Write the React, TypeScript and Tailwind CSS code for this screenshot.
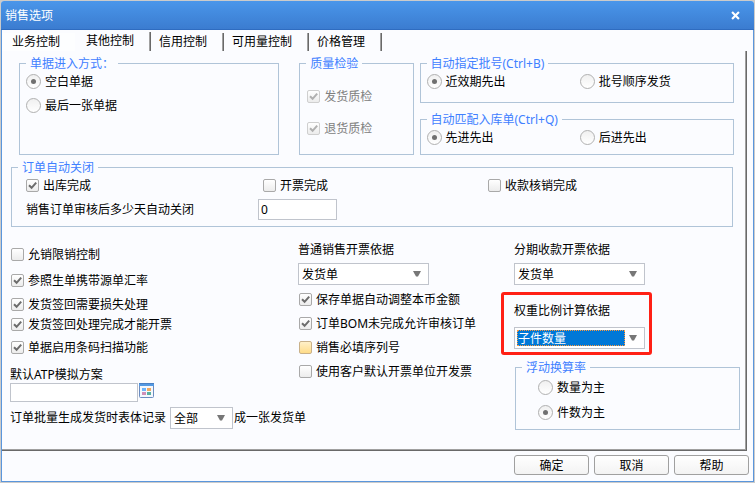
import { useState, type ReactNode } from "react";
import clsx from "clsx";

const TABS = ["业务控制", "其他控制", "信用控制", "可用量控制", "价格管理"];

function Group({ title, className, children }: { title: string; className?: string; children: ReactNode }) {
  return (
    <fieldset className={clsx("min-w-0 border border-[#b0c4d8] pl-[6px]", className)}>
      <legend className="px-1 pt-px leading-[14px] text-[#4080ff]">{title}</legend>
      {children}
    </fieldset>
  );
}

function Check({ label, checked = false, disabled, hot }: { label: string; checked?: boolean; disabled?: boolean; hot?: boolean }) {
  return (
    <label className={clsx("flex h-5 items-center gap-1 whitespace-nowrap", disabled && "text-[#808080]")}>
      <span className="relative flex size-[13px] shrink-0">
        <input
          type="checkbox"
          defaultChecked={checked}
          disabled={disabled}
          className={clsx(
            "peer size-[13px] appearance-none rounded-[2px] border bg-linear-to-b",
            hot ? "border-[#c9b189] from-[#fff0c8] to-[#ffdc88]" : "from-white to-[#ececec]",
            !hot && (disabled ? "border-[#cfcfcf]" : "border-[#a9a9a9]")
          )}
        />
        <svg viewBox="0 0 13 13" className={clsx("pointer-events-none absolute inset-0 hidden size-[13px] peer-checked:block", disabled ? "text-[#b0b0b0]" : "text-[#6c6c6c]")}>
          <path d="M3 6.2 5.6 8.8 10.2 3.6" fill="none" stroke="currentColor" strokeWidth="2" />
        </svg>
      </span>
      <span className="pt-[2px]">{label}</span>
    </label>
  );
}

function Radio({ name, label, checked = false }: { name: string; label: string; checked?: boolean }) {
  return (
    <label className="flex h-5 items-center gap-1 whitespace-nowrap">
      <span className="relative flex size-[15px] shrink-0">
        <input
          type="radio"
          name={name}
          defaultChecked={checked}
          className="peer size-[15px] appearance-none rounded-full border border-[#b0b0b0] bg-linear-to-b from-[#f0f0f0] to-white"
        />
        <span className="pointer-events-none absolute inset-[5px] hidden rounded-full bg-[#707070] peer-checked:block" />
      </span>
      <span className="pt-[2px]">{label}</span>
    </label>
  );
}

function Combo({ id, label, options, className, active }: { id: string; label: string; options: string[]; className?: string; active?: boolean }) {
  return (
    <div className={clsx("flex h-[22px] items-center border border-[#c0c4cc] bg-white p-[2px]", className)}>
      <select
        id={id}
        aria-label={label}
        className={clsx(
          "h-4 min-w-0 flex-1 appearance-none outline-none",
          active ? "border border-dotted border-[#ff9a3c] bg-[#0078d7] pt-px leading-[14px] text-white" : "px-px pt-px leading-4"
        )}
      >
        {options.map(o => <option key={o}>{o}</option>)}
      </select>
      <svg viewBox="0 0 8 6" className="pointer-events-none mr-[5px] ml-1 h-[6px] w-2 shrink-0">
        <path d="M0 0H8L5 5.5H3Z" fill="#777" />
      </svg>
    </div>
  );
}

function PickerIcon() {
  return (
    <svg viewBox="0 0 15 15" className="size-[15px]">
      <rect x=".5" y=".5" width="14" height="14" rx="1" fill="#f4f8fd" stroke="#6b8cc0" />
      <path d="M0 0H15V3H0Z" fill="#5499e2" />
      <path d="M0 0H15V1H0Z" fill="#4a80c4" />
      <path d="M3 5H7V8H3Z" fill="#6eb4fa" />
      <path d="M8 5H12V8H8Z" fill="#f2a860" />
      <path d="M3 9H7V12H3Z" fill="#cf8fb8" />
      <path d="M8 9H12V12H8Z" fill="#58b0a0" />
    </svg>
  );
}

export default function App() {
  const [tab, setTab] = useState(1);

  return (
    <div className="bg-[#cbcbcb] p-px font-['Noto_Sans','Noto_Sans_CJK_SC',sans-serif] text-[12px] leading-4 text-black">
      <div className="overflow-hidden rounded-t-[3px] bg-[#fbfcff]">
        <header className="flex h-[29px] items-center justify-between border-b border-[#2f6cc0] bg-linear-to-b from-[#4a96ea] to-[#3b7cd0] pr-[13px] pl-1 text-white">
          <h1 className="pt-px">销售选项</h1>
          <button aria-label="关闭" className="p-px">
            <svg viewBox="0 0 10 10" className="size-[9px]">
              <path d="M1.2 1.2 8.8 8.8M8.8 1.2 1.2 8.8" stroke="#fff" strokeWidth="2.4" />
            </svg>
          </button>
        </header>

        <div className="border-x border-b border-[#5a96dc]">
          <div role="tablist" className="flex h-[21px] items-end">
            {TABS.map((t, i) => (
              <button
                key={t}
                role="tab"
                aria-selected={tab === i}
                onClick={() => setTab(i)}
                className={clsx(
                  "whitespace-nowrap",
                  i === 0 && "h-[18px] bg-[#fdfeff] pr-[15px] pl-[10px]",
                  i === 1 && "h-[19px] pr-4 pl-[11px]",
                  i > 1 && "h-[18px] pr-4 pl-2",
                  i > 0 && "border-r border-[#696969] shadow-[inset_-1px_0_#a0a0a0]",
                  tab === i && "pb-[2px]"
                )}
              >
                {t}
              </button>
            ))}
          </div>

          <main className="mr-[6px] border-r border-b border-[#696969] pt-[5px] pb-5 pl-[9px] shadow-[inset_-1px_-1px_#a0a0a0]">
            <div className="mr-3 ml-2 grid grid-cols-[260fr_454fr]">
              <Group title="单据进入方式：">
                <div className="flex flex-col gap-1">
                  <Radio name="entry" label="空白单据" checked />
                  <Radio name="entry" label="最后一张单据" />
                </div>
              </Group>
              <div className="ml-5 grid grid-cols-[114fr_314fr] gap-[6px]">
                <Group title="质量检验">
                  <div className="flex flex-col gap-3 pt-[15px] pl-px">
                    <Check label="发货质检" checked disabled />
                    <Check label="退货质检" checked disabled />
                  </div>
                </Group>
                <div className="flex flex-col gap-[9px]">
                  <Group title="自动指定批号(Ctrl+B)">
                    <div className="grid grid-cols-2 pb-[11px]">
                      <Radio name="batch" label="近效期先出" checked />
                      <Radio name="batch" label="批号顺序发货" />
                    </div>
                  </Group>
                  <Group title="自动匹配入库单(Ctrl+Q)">
                    <div className="grid grid-cols-2 pb-[7px]">
                      <Radio name="match" label="先进先出" checked />
                      <Radio name="match" label="后进先出" />
                    </div>
                  </Group>
                </div>
              </div>
            </div>

            <Group title="订单自动关闭" className="mt-[5px] mr-[13px]">
              <div className="grid grid-cols-[237fr_225fr_244fr] pl-2">
                <Check label="出库完成" checked />
                <Check label="开票完成" />
                <Check label="收款核销完成" />
              </div>
              <div className="mt-1 grid grid-cols-[232fr_474fr] items-center pb-[6px] pl-2">
                <label htmlFor="closeDays">销售订单审核后多少天自动关闭</label>
                <input id="closeDays" defaultValue="0" className="h-[21px] w-[79px] border border-[#c0c4cc] bg-white px-[2px] outline-none" />
              </div>
            </Group>

            <div className="mr-[6px] grid grid-cols-[minmax(0,287fr)_203fr_239fr]">
              <div className="pt-[17px]">
                <div className="flex flex-col">
                  <Check label="允销限销控制" />
                  <div className="mt-[6px] mb-1"><Check label="参照生单携带源单汇率" checked /></div>
                  <Check label="发货签回需要损失处理" checked />
                  <Check label="发货签回处理完成才能开票" checked />
                  <div className="mt-[3px]"><Check label="单据启用条码扫描功能" checked /></div>
                </div>
                <div className="-ml-px">
                  <label htmlFor="atp" className="mt-[10px] block">默认ATP模拟方案</label>
                  <div className="flex gap-px">
                    <input id="atp" className="h-[19px] w-32 border border-[#c0c4cc] bg-white px-[2px] outline-none" />
                    <button aria-label="选择方案" className="self-start"><PickerIcon /></button>
                  </div>
                  <div className="mt-[5px] flex items-center whitespace-nowrap">
                    <label htmlFor="batchScope" className="mr-1">订单批量生成发货时表体记录</label>
                    <Combo id="batchScope" label="表体记录范围" options={["全部"]} className="mr-px w-[63px] shrink-0" />
                    成一张发货单
                  </div>
                </div>
              </div>

              <div className="pt-[15px]">
                <label htmlFor="normalBasis" className="block">普通销售开票依据</label>
                <Combo id="normalBasis" label="普通销售开票依据" options={["发货单"]} className="mt-[5px] w-[131px]" />
                <div className="mt-1 flex flex-col gap-1 pl-px">
                  <Check label="保存单据自动调整本币金额" checked />
                  <Check label="订单BOM未完成允许审核订单" checked />
                  <Check label="销售必填序列号" hot />
                  <Check label="使用客户默认开票单位开发票" />
                </div>
              </div>

              <div className="pt-[15px]">
                <div className="pl-[13px]">
                  <label htmlFor="stageBasis" className="block">分期收款开票依据</label>
                  <Combo id="stageBasis" label="分期收款开票依据" options={["发货单"]} className="mt-[5px] w-[131px]" />
                </div>
                <div className="mt-[7px] w-[151px] rounded-[3px] border-3 border-[#ff2015] pt-2 pb-[3px] pl-[10px]">
                  <label htmlFor="weightBasis" className="block">权重比例计算依据</label>
                  <Combo id="weightBasis" label="权重比例计算依据" options={["子件数量"]} active className="mt-2 w-[131px]" />
                </div>
                <Group title="浮动换算率" className="mt-[5px] ml-[14px]">
                  <div className="flex flex-col gap-[5px] pt-[2px] pb-[7px] pl-4">
                    <Radio name="floatRate" label="数量为主" />
                    <Radio name="floatRate" label="件数为主" checked />
                  </div>
                </Group>
              </div>
            </div>
          </main>

          <footer className="flex justify-end gap-[5px] pt-1 pr-1 pb-[6px]">
            {["确定", "取消", "帮助"].map(b => (
              <button key={b} className="h-5 w-[75px] rounded-[3px] border border-[#a0a0a0] bg-linear-to-b from-white to-[#f3f3f3] pt-px">
                {b}
              </button>
            ))}
          </footer>
        </div>
      </div>
    </div>
  );
}
